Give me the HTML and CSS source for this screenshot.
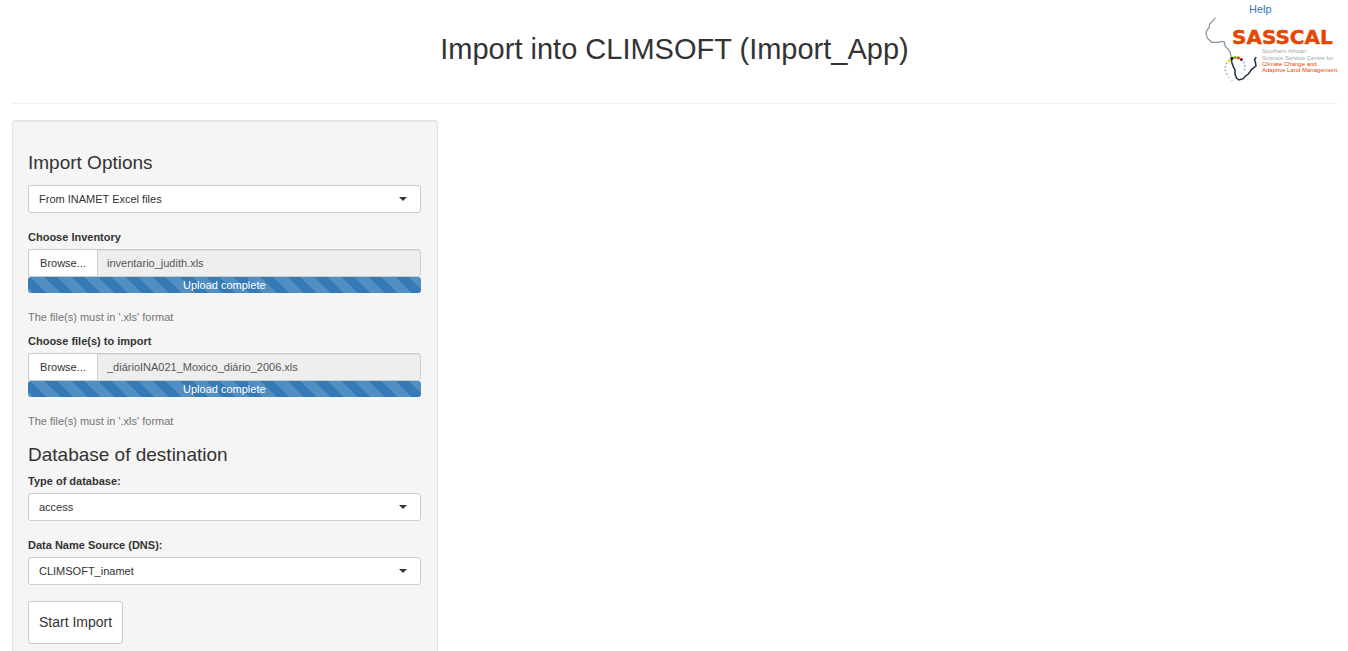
FILE: index.html
```html
<!DOCTYPE html>
<html lang="en">
<head>
<meta charset="utf-8">
<title>Import into CLIMSOFT (Import_App)</title>
<link rel="stylesheet" href="styles.css">
</head>
<body>
<div class="page">
  <header class="header">
    <h1 class="title">Import into CLIMSOFT (Import_App)</h1>
    <div class="brand">
      <a class="help-link" href="#">Help</a>
      <svg class="logo" width="134" height="66" viewBox="0 0 134 66" role="img" aria-label="SASSCAL">
        <path class="coast" d="M10.3 .5 8.3 3.7 4.5 7 4.3 10.5 2 13 1 16 2.3 21.3 6.7 25.3 13.3 25.3 16.7 24.3 19.3 25 20 29 23.3 32.3 25.3 35.7 26 39.7"/>
        <path class="coast-dark" d="M26.3 42.5 27 46 28.3 49.7 30 53 30 57 31.5 61 34 63 38.3 61.7 40.5 59 43.3 57 46.7 52.3 51 49 50.3 44.7 49.5 42.5 51.3 40.3"/>
        <g class="dots">
          <circle cx="38.7" cy="45.5" r="1"/><circle cx="40" cy="49" r="1"/><circle cx="39.5" cy="52.6" r="1"/>
          <circle cx="21.7" cy="46.3" r="1"/><circle cx="20.3" cy="49.7" r="1"/><circle cx="20.3" cy="53.3" r="1"/>
          <circle cx="21.7" cy="57" r=".9"/><circle cx="23.7" cy="60.3" r=".7"/><circle cx="27" cy="63.4" r=".6"/>
        </g>
        <circle cx="24" cy="43.7" r="1.5" fill="#f5dc00"/>
        <circle cx="26.9" cy="41.4" r="1.6" fill="#111"/>
        <circle cx="30.1" cy="40.5" r="1.6" fill="#5cb800"/>
        <circle cx="33.4" cy="40.8" r="1.6" fill="#e64600"/>
        <circle cx="36.4" cy="42.5" r="1.5" fill="#7d1730"/>
        <text class="logo-name" x="27" y="27">SASSCAL</text>
        <g class="logo-grey"><text x="57" y="36">Southern African</text><text x="57" y="43">Science Service Centre for</text></g>
        <g class="logo-orange"><text x="57" y="49">Climate Change and</text><text x="57" y="55">Adaptive Land Management</text></g>
      </svg>
    </div>
  </header>

  <main class="columns">
    <form class="panel">
      <h2 class="heading">Import Options</h2>
      <div class="select first">
        <select aria-label="Import Options"><option>From INAMET Excel files</option></select>
      </div>

      <label class="label spaced" for="inventory">Choose Inventory</label>
      <div class="file">
        <button type="button" class="browse">Browse...</button>
        <input id="inventory" class="file-name" type="text" value="inventario_judith.xls" readonly>
      </div>
      <div class="progress">Upload complete</div>
      <p class="hint">The file(s) must in '.xls' format</p>

      <label class="label" for="files">Choose file(s) to import</label>
      <div class="file">
        <button type="button" class="browse">Browse...</button>
        <input id="files" class="file-name" type="text" value="_diárioINA021_Moxico_diário_2006.xls" readonly>
      </div>
      <div class="progress">Upload complete</div>
      <p class="hint">The file(s) must in '.xls' format</p>

      <h2 class="heading">Database of destination</h2>
      <label class="label" for="dbtype">Type of database:</label>
      <div class="select">
        <select id="dbtype"><option>access</option></select>
      </div>
      <label class="label spaced" for="dns">Data Name Source (DNS):</label>
      <div class="select">
        <select id="dns"><option>CLIMSOFT_inamet</option></select>
      </div>
      <button type="button" class="start">Start Import</button>
    </form>
  </main>
</div>
</body>
</html>
```
FILE: styles.css
```css
* { box-sizing: border-box; }

body {
  margin: 0;
  background: #fff;
  color: #333;
  font: 11px/16px "Liberation Sans", Arial, sans-serif;
}

button, input, select { font: inherit; color: inherit; margin: 0; }

.page { padding: 0 11px 0 12px; }

.header {
  display: grid;
  grid-template-columns: 1fr auto 1fr;
  padding: 1px 0 20px;
  border-bottom: 1px solid #eee;
  margin-bottom: 16px;
}

.title {
  grid-column: 2;
  margin: 32px 0 0;
  font-size: 29px;
  line-height: 32px;
  font-weight: 400;
}

.brand {
  justify-self: end;
  width: 132px;
  display: flex;
  flex-direction: column;
}

.help-link {
  margin-left: 44px;
  color: #337ab7;
  text-decoration: none;
}

.logo { display: block; overflow: visible; }
.coast { fill: none; stroke: #7d929d; stroke-width: 1.2; }
.coast-dark { fill: none; stroke: #1f3140; stroke-width: 1.5; }
.dots { fill: #a3b0b7; }
.logo-name { font: bold 20px "DejaVu Sans", sans-serif; fill: #e64600; stroke: #e64600; stroke-width: .4; }
.logo-grey { font: 6px "Liberation Sans", Arial, sans-serif; fill: #9aa8b0; }
.logo-orange { font: 6px "Liberation Sans", Arial, sans-serif; fill: #e64600; }

.columns {
  display: grid;
  grid-template-columns: repeat(3, 1fr);
  gap: 24px;
}

.panel {
  padding: 16px 16px 16px 15px;
  background: #f5f5f5;
  border: 1px solid #e3e3e3;
  border-radius: 3px;
  box-shadow: inset 0 1px 1px rgba(0, 0, 0, .05);
}

.heading {
  margin: 15px 0 8px;
  font-size: 19px;
  line-height: 21px;
  font-weight: 400;
}

.label {
  display: block;
  margin-bottom: 4px;
  font-weight: 700;
}

.spaced { margin-top: 16px; }

.select { position: relative; }
.first { margin-top: 12px; }

.select select {
  display: block;
  width: 100%;
  height: 28px;
  padding: 0 28px 0 10px;
  appearance: none;
  background: #fff;
  border: 1px solid #ccc;
  border-radius: 3px;
}

.select::after {
  content: "";
  position: absolute;
  top: 12px;
  right: 14px;
  border: 4px solid transparent;
  border-top-color: #333;
  border-bottom: 0;
  pointer-events: none;
}

.file { display: flex; height: 28px; }

.browse {
  padding: 0 10px;
  width: 69px;
  background: #fff;
  border: 1px solid #ccc;
  border-right: 0;
  border-radius: 3px 0 0 3px;
}

.file-name {
  flex: 1;
  min-width: 0;
  padding: 0 9px;
  background: #eee;
  color: #555;
  border: 1px solid #ccc;
  border-radius: 0 3px 3px 0;
  box-shadow: inset 0 1px 1px rgba(0, 0, 0, .075);
}

.progress {
  height: 16px;
  border-radius: 3px;
  background-color: #337ab7;
  background-image: linear-gradient(45deg, rgba(255, 255, 255, .15) 25%, transparent 25%, transparent 50%, rgba(255, 255, 255, .15) 50%, rgba(255, 255, 255, .15) 75%, transparent 75%, transparent);
  background-position: 3px 0;
  background-size: 27px 27px;
  color: #fff;
  text-align: center;
}

.hint { margin: 16px 0 8px; color: #737373; }

.start {
  display: block;
  margin-top: 16px;
  padding: 0 10px 2px;
  height: 43px;
  font-size: 14px;
  background: #fff;
  border: 1px solid #ccc;
  border-radius: 3px;
}
```
